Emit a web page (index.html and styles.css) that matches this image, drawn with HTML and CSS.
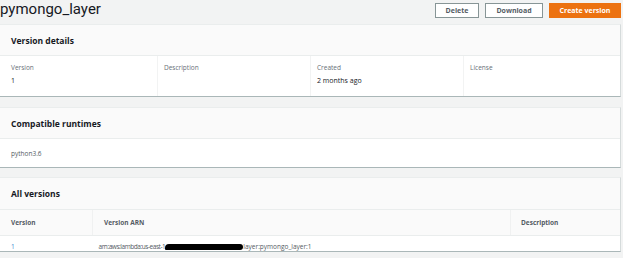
FILE: index.html
```html
<html>
    <head>
        <title>pymongo_layer</title>
        <link rel="stylesheet" href="styles.css">
    </head>
    <body>
        <div class="topbar">
            <h1 class="title">pymongo_layer</h1>
            <div class="actions">
                <button class="btn">Delete</button>
                <button class="btn">Download</button>
                <button class="btn primary">Create version</button>
            </div>
        </div>

        <!-- Version details -->
        <section class="panel details-panel">
            <div class="panel-head"><h2>Version details</h2></div>
            <div class="details">
                <div class="col"><div class="label">Version</div><div class="value">1</div></div>
                <div class="col"><div class="label">Description</div><div class="value"></div></div>
                <div class="col"><div class="label">Created</div><div class="value">2 months ago</div></div>
                <div class="col"><div class="label">License</div><div class="value"></div></div>
            </div>
        </section>

        <!-- Runtimes -->
        <section class="panel">
            <div class="panel-head"><h2>Compatible runtimes</h2></div>
            <div class="runtimes">python3.6</div>
        </section>

        <!-- All versions -->
        <section class="panel versions-panel">
            <div class="panel-head"><h2>All versions</h2></div>
            <table class="versions">
                <thead>
                    <tr>
                        <th class="c-version">Version</th>
                        <th class="c-arn">Version ARN</th>
                        <th class="c-desc">Description</th>
                    </tr>
                </thead>
                <tbody>
                    <tr>
                        <td class="c-version"><a href="#">1</a></td>
                        <td class="c-arn"><span class="arn-start">arn:aws:lambda:us-east-1</span><span class="redacted"></span>layer:pymongo_layer:1</td>
                        <td class="c-desc"></td>
                    </tr>
                </tbody>
            </table>
        </section>
    </body>
</html>
```

FILE: styles.css
```css
body{
    margin: 0;
    background: #f2f3f3;
    color: #16191f;
    font-family: 'Open Sans', sans-serif;
}

.topbar{
    display: flex;
    justify-content: space-between;
    align-items: flex-start;
    height: 24px;
}

.title{
    margin: 0;
    font-family: Roboto, sans-serif;
    font-size: 15px;
    font-weight: normal;
    line-height: 19px;
    color: #16191f;
}

.actions{
    display: flex;
    gap: 6px;
    padding-top: 3px;
    padding-right: 2px;
}

.btn{
    height: 15px;
    padding: 0 8px;
    border: 1px solid #879596;
    background: white;
    color: #545b64;
    font-family: 'Open Sans', sans-serif;
    font-size: 7px;
    font-weight: bold;
    line-height: 13px;
}

.btn:first-child{
    width: 44px;
}

.btn:nth-child(2){
    width: 58px;
}

.btn.primary{
    width: 72px;
    background: #ec7211;
    border-color: #ec7211;
    color: white;
}

.panel{
    margin-right: 2px;
    margin-bottom: 9px;
    background: white;
    border-top: 1px solid #eaeded;
    border-right: 1px solid #d5dbdb;
    border-bottom: 1px solid #aab7b8;
}

.details-panel{
    margin-bottom: 10px;
}

.panel-head{
    background: #fafafa;
    height: 30px;
    padding-left: 11px;
    display: flex;
    align-items: center;
    border-bottom: 1px solid #eaeded;
}

.versions-panel .panel-head{
    height: 31px;
}

.panel-head h2{
    margin: 0;
    font-size: 8.5px;
    font-weight: bold;
}

.details{
    display: grid;
    grid-template-columns: repeat(4, 1fr);
    padding: 0 4px 0 4px;
    height: 40px;
}

.details .col{
    padding: 7px 6px 0 6px;
    border-left: 1px solid #f2f3f3;
}

.details .col:first-child{
    border-left: none;
    padding-left: 7px;
}

.label{
    font-size: 6.5px;
    color: #687078;
    line-height: 10px;
}

.value{
    margin-top: 3px;
    font-size: 7px;
    line-height: 10px;
}

.runtimes{
    height: 28px;
    padding-left: 11px;
    display: flex;
    align-items: center;
    font-size: 6.5px;
    color: #545b64;
}

.versions{
    width: 100%;
    border-collapse: collapse;
    font-size: 6.5px;
}

.versions th{
    background: #fafafa;
    height: 25px;
    text-align: left;
    color: #545b64;
    font-weight: bold;
    padding: 0;
    border-left: 1px solid #f0f1f1;
    border-bottom: 1px solid #eaeded;
}

.versions th:first-child{
    border-left: none;
}

.versions td{
    height: 15px;
    padding: 6px 0 0 0;
    color: #545b64;
}

.c-version{
    width: 81px;
    padding-left: 11px !important;
}

td.c-arn{
    padding-left: 6px !important;
}

th.c-arn{
    padding-left: 11px !important;
}

.c-desc{
    width: 99px;
    padding-left: 10px !important;
}

.arn-start{
    letter-spacing: -0.45px;
}

.versions a{
    color: #3d8bcf;
    text-decoration: none;
}

.redacted{
    display: inline-block;
    width: 78px;
    height: 6px;
    background: #000;
    border-radius: 4px 3px 3px 1px;
    vertical-align: -1px;
}
```
